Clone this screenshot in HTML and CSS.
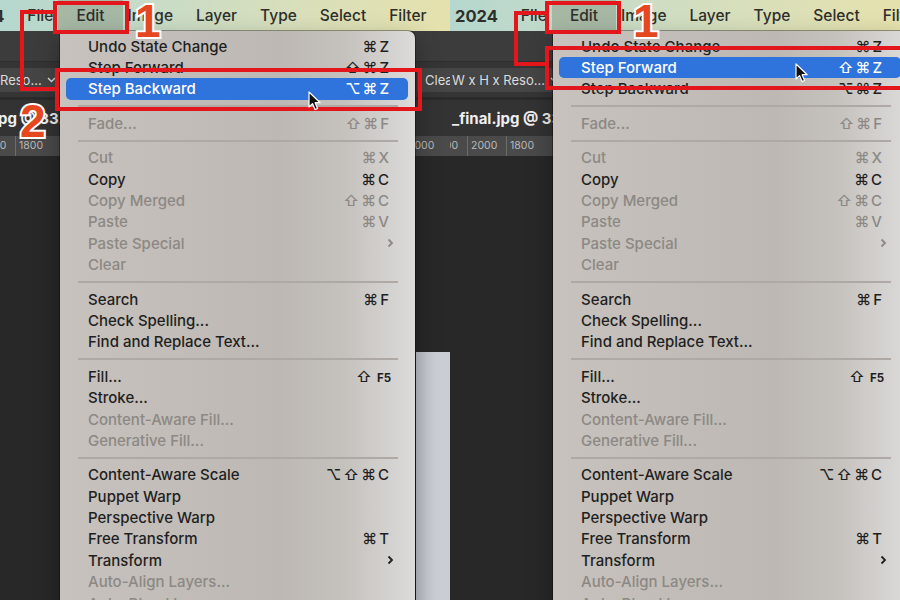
FILE: index.html
```html
<!DOCTYPE html>
<html lang="en">
<head>
<meta charset="utf-8">
<title>Edit menu – Step Backward / Step Forward</title>
<link rel="stylesheet" href="styles.css">
</head>
<body>
<main class="stage">
  <section class="panel panel-left">
    <div class="app">
      <nav class="menubar">
        <span class="mb-item mb-app">2024</span>
        <span class="mb-item">File</span>
        <span class="mb-item active">Edit</span>
        <span class="mb-item">Image</span>
        <span class="mb-item">Layer</span>
        <span class="mb-item">Type</span>
        <span class="mb-item">Select</span>
        <span class="mb-item">Filter</span>
      </nav>
      <div class="toolbar"></div>
      <div class="options">
        <span class="opt-box opt-first">Reso... <svg width="9" height="6" viewBox="0 0 9 6"><path d="M1 1l3.5 3.5L8 1" fill="none" stroke="#ddd" stroke-width="1.4"/></svg></span>
        <span class="opt-box opt-clip">Clear</span>
      </div>
      <div class="tabs"><span class="tab">jpg @ 33.2</span></div>
      <div class="ruler">
        <div class="rgroup"><span>2000</span><span>1800</span></div>
        <div class="rgroup rgroup-end"><span>2000</span></div>
      </div>
      <div class="canvas"><div class="doc"></div></div>
    </div>

    <div class="menu">
      <div class="mi"><span>Undo State Change</span><span class="kb">⌘Z</span></div>
      <div class="mi"><span>Step Forward</span><span class="kb">⇧⌘Z</span></div>
      <div class="mi sel"><span>Step Backward</span><span class="kb">⌥⌘Z</span></div>
      <div class="sep"></div>
      <div class="mi dis"><span>Fade...</span><span class="kb">⇧⌘F</span></div>
      <div class="sep"></div>
      <div class="mi dis"><span>Cut</span><span class="kb">⌘X</span></div>
      <div class="mi"><span>Copy</span><span class="kb">⌘C</span></div>
      <div class="mi dis"><span>Copy Merged</span><span class="kb">⇧⌘C</span></div>
      <div class="mi dis"><span>Paste</span><span class="kb">⌘V</span></div>
      <div class="mi dis"><span>Paste Special</span><svg class="chev" width="7" height="10" viewBox="0 0 7 10"><path d="M1.5 1.5L5 5l-3.5 3.5" fill="none" stroke="currentColor" stroke-width="1.8"/></svg></div>
      <div class="mi dis"><span>Clear</span></div>
      <div class="sep"></div>
      <div class="mi"><span>Search</span><span class="kb">⌘F</span></div>
      <div class="mi"><span>Check Spelling...</span></div>
      <div class="mi"><span>Find and Replace Text...</span></div>
      <div class="sep"></div>
      <div class="mi"><span>Fill...</span><span class="kb">⇧<span class="fk">F5</span></span></div>
      <div class="mi"><span>Stroke...</span></div>
      <div class="mi dis"><span>Content-Aware Fill...</span></div>
      <div class="mi dis"><span>Generative Fill...</span></div>
      <div class="sep"></div>
      <div class="mi"><span>Content-Aware Scale</span><span class="kb">⌥⇧⌘C</span></div>
      <div class="mi"><span>Puppet Warp</span></div>
      <div class="mi"><span>Perspective Warp</span></div>
      <div class="mi"><span>Free Transform</span><span class="kb">⌘T</span></div>
      <div class="mi"><span>Transform</span><svg class="chev" width="7" height="10" viewBox="0 0 7 10"><path d="M1.5 1.5L5 5l-3.5 3.5" fill="none" stroke="currentColor" stroke-width="1.8"/></svg></div>
      <div class="mi dis"><span>Auto-Align Layers...</span></div>
      <div class="mi dis"><span>Auto-Blend Layers...</span></div>
    </div>

    <div class="mark box-edit"></div>
    <div class="mark bracket"></div>
    <div class="mark box-item"></div>
    <span class="num num-1">1</span>
    <span class="num num-2">2</span>
    <svg class="cursor" width="14" height="21" viewBox="0 0 14 21"><path d="M1 1L1 16L4.5 12.6L7 18.6L9.6 17.5L7.1 11.7L12.2 11.7Z" fill="#111" stroke="#fff" stroke-width="1.2" stroke-linejoin="round"/></svg>
  </section>

  <section class="panel panel-right">
    <div class="app">
      <nav class="menubar">
        <span class="mb-item mb-app">2024</span>
        <span class="mb-item">File</span>
        <span class="mb-item active">Edit</span>
        <span class="mb-item">Image</span>
        <span class="mb-item">Layer</span>
        <span class="mb-item">Type</span>
        <span class="mb-item">Select</span>
        <span class="mb-item">Filter</span>
      </nav>
      <div class="toolbar"></div>
      <div class="options">
        <span class="opt-box opt-first">W x H x Reso... <svg width="9" height="6" viewBox="0 0 9 6"><path d="M1 1l3.5 3.5L8 1" fill="none" stroke="#ddd" stroke-width="1.4"/></svg></span>
      </div>
      <div class="tabs"><span class="tab">_final.jpg @ 33.2</span></div>
      <div class="ruler">
        <div class="rgroup"><span>2200</span><span>2000</span><span>1800</span></div>
      </div>
      <div class="canvas"></div>
    </div>

    <div class="menu">
      <div class="mi"><span>Undo State Change</span><span class="kb">⌘Z</span></div>
      <div class="mi sel"><span>Step Forward</span><span class="kb">⇧⌘Z</span></div>
      <div class="mi"><span>Step Backward</span><span class="kb">⌥⌘Z</span></div>
      <div class="sep"></div>
      <div class="mi dis"><span>Fade...</span><span class="kb">⇧⌘F</span></div>
      <div class="sep"></div>
      <div class="mi dis"><span>Cut</span><span class="kb">⌘X</span></div>
      <div class="mi"><span>Copy</span><span class="kb">⌘C</span></div>
      <div class="mi dis"><span>Copy Merged</span><span class="kb">⇧⌘C</span></div>
      <div class="mi dis"><span>Paste</span><span class="kb">⌘V</span></div>
      <div class="mi dis"><span>Paste Special</span><svg class="chev" width="7" height="10" viewBox="0 0 7 10"><path d="M1.5 1.5L5 5l-3.5 3.5" fill="none" stroke="currentColor" stroke-width="1.8"/></svg></div>
      <div class="mi dis"><span>Clear</span></div>
      <div class="sep"></div>
      <div class="mi"><span>Search</span><span class="kb">⌘F</span></div>
      <div class="mi"><span>Check Spelling...</span></div>
      <div class="mi"><span>Find and Replace Text...</span></div>
      <div class="sep"></div>
      <div class="mi"><span>Fill...</span><span class="kb">⇧<span class="fk">F5</span></span></div>
      <div class="mi"><span>Stroke...</span></div>
      <div class="mi dis"><span>Content-Aware Fill...</span></div>
      <div class="mi dis"><span>Generative Fill...</span></div>
      <div class="sep"></div>
      <div class="mi"><span>Content-Aware Scale</span><span class="kb">⌥⇧⌘C</span></div>
      <div class="mi"><span>Puppet Warp</span></div>
      <div class="mi"><span>Perspective Warp</span></div>
      <div class="mi"><span>Free Transform</span><span class="kb">⌘T</span></div>
      <div class="mi"><span>Transform</span><svg class="chev" width="7" height="10" viewBox="0 0 7 10"><path d="M1.5 1.5L5 5l-3.5 3.5" fill="none" stroke="currentColor" stroke-width="1.8"/></svg></div>
      <div class="mi dis"><span>Auto-Align Layers...</span></div>
      <div class="mi dis"><span>Auto-Blend Layers...</span></div>
    </div>

    <div class="mark box-edit"></div>
    <div class="mark bracket"></div>
    <div class="mark box-item"></div>
    <span class="num num-1">1</span>
    <svg class="cursor" width="14" height="21" viewBox="0 0 14 21"><path d="M1 1L1 16L4.5 12.6L7 18.6L9.6 17.5L7.1 11.7L12.2 11.7Z" fill="#111" stroke="#fff" stroke-width="1.2" stroke-linejoin="round"/></svg>
  </section>
</main>
</body>
</html>
```
FILE: styles.css
```css
* { box-sizing: border-box; }
html, body { margin: 0; padding: 0; }
body {
  width: 900px;
  height: 600px;
  overflow: hidden;
  background: #282828;
  font-family: "Inter", "DejaVu Sans", sans-serif;
}
.stage { display: flex; width: 900px; height: 600px; }
.panel {
  position: relative;
  flex: none;
  width: 450px;
  height: 600px;
  overflow: hidden;
}
.app { display: flex; flex-direction: column; height: 100%; }

/* menu bar */
.menubar {
  flex: none;
  height: 31px;
  display: flex;
  align-items: stretch;
  white-space: nowrap;
  font-size: 15.5px;
  font-weight: 500;
  color: #2e2f2b;
  background: linear-gradient(90deg, #b5d7ce 0%, #c6dbc8 30%, #d8dfbb 65%, #e5e1ad 100%);
}
.mb-item { display: flex; align-items: center; padding: 0 11.5px; flex: none; }
.mb-item.active { background: #a6b7a4; padding: 0 18px; margin: 0 -6.5px; }
.mb-app { font-weight: 700; font-size: 16.5px; }
.panel-left .mb-app { margin-left: -50px; }
.panel-right .mb-app { margin-left: -6.5px; }

/* dark app chrome */
.toolbar { flex: none; height: 31px; background: #3c3c3c; border-bottom: 1px solid #2e2e2e; }
.options {
  flex: none;
  height: 35px;
  display: flex;
  align-items: center;
  justify-content: space-between;
  background: #353535;
}
.opt-box {
  display: flex;
  align-items: center;
  gap: 5px;
  height: 24px;
  padding: 0 6px;
  background: #454545;
  border-radius: 3px;
  color: #dcdcdc;
  font-size: 13px;
  white-space: nowrap;
}
.panel-left .opt-first { margin-left: -6px; }
.panel-right .opt-first { margin-left: -4px; }
.opt-clip { flex: none; width: 33px; overflow: hidden; padding: 0 0 0 8px; border-radius: 3px 0 0 3px; }
.tabs {
  flex: none;
  height: 39px;
  display: flex;
  align-items: center;
  background: #333333;
  border-top: 3px solid #2a2a2a;
}
.tab { color: #efefef; font-size: 15px; font-weight: 700; white-space: nowrap; }
.panel-left .tab { margin-left: -6px; }
.panel-right .tab { margin-left: 2px; }
.ruler {
  flex: none;
  height: 20px;
  display: flex;
  justify-content: space-between;
  background: #4a4a4a;
  color: #b9b9b9;
  font-size: 10.5px;
  line-height: 20px;
}
.rgroup { display: flex; }
.rgroup span { flex: none; width: 39px; padding-left: 3px; border-left: 1px solid #6c6c6c; }
.panel-left .rgroup:first-child { margin-left: -24px; }
.panel-left .rgroup-end { margin-right: 7px; }
.panel-right .rgroup { margin-left: -22px; }
.canvas {
  flex: 1;
  display: flex;
  justify-content: flex-end;
  align-items: flex-end;
  background: #282828;
}
.doc { width: 34px; height: 248px; background: linear-gradient(90deg, #c1c5cc, #ccd0d6 60%, #c8ccd3); }

/* dropdown menu */
.menu {
  position: absolute;
  top: 31px;
  width: 355px;
  height: 600px;
  padding: 4.5px 7px 0 6px;
  border-radius: 0 7px 7px 7px;
  background: linear-gradient(90deg, #c7c2bd 0%, #bfbab5 50%, #bdb8b3 62%, #c5c1bd 80%, #d4d2d0 93%, #dcdbda 100%);
  box-shadow: 0 0 0 1px rgba(0,0,0,0.35), 0 10px 24px rgba(0,0,0,0.35);
  font-size: 15px;
  font-weight: 500;
  color: #1f1f1f;
  z-index: 2;
}
.panel-left .menu { left: 60px; }
.panel-right .menu { left: 103px; }
.mi {
  height: 21.35px;
  display: flex;
  align-items: center;
  justify-content: space-between;
  padding: 0 19px 0 22px;
  border-radius: 5px;
  white-space: nowrap;
}
.mi.dis { color: #8c8884; }
.mi.sel { background: #2f73dc; color: #fff; }
.kb { letter-spacing: 2px; margin-right: -2px; }
.fk { font-size: 11.5px; font-weight: 700; letter-spacing: 0; margin-left: 3px; }
.chev { margin-right: -5px; }
.sep { height: 13.2px; display: flex; align-items: center; padding: 0 10px 0 12px; }
.sep::before { content: ""; flex: 1; height: 2px; background: #aea9a4; }

/* annotations */
.mark { position: absolute; z-index: 5; border: 4px solid #e3161c; }
.bracket { border-right: none; }
.panel-left .box-edit { left: 53px; top: 1px; width: 76px; height: 33px; }
.panel-left .bracket { left: 20px; top: 10px; width: 36px; height: 81px; }
.panel-left .box-item { left: 55px; top: 68px; width: 367px; height: 43px; }
.panel-right .box-edit { left: 95px; top: 1px; width: 76px; height: 33px; }
.panel-right .bracket { left: 64px; top: 11px; width: 34px; height: 55px; }
.panel-right .box-item { left: 95px; top: 46px; width: 380px; height: 44px; }

.num {
  position: absolute;
  z-index: 6;
  font-family: "Liberation Sans", Arial, sans-serif;
  font-weight: 700;
  font-size: 46px;
  line-height: 1;
  color: #e5481f;
  -webkit-text-stroke: 4px #ffffff;
  paint-order: stroke fill;
}
.panel-left .num-1 { left: 135px; top: -2px; }
.panel-left .num-2 { left: 20px; top: 98px; }
.panel-right .num-1 { left: 183px; top: -2px; }

.cursor { position: absolute; z-index: 7; }
.panel-left .cursor { left: 308px; top: 91px; }
.panel-right .cursor { left: 345px; top: 63px; }
```
